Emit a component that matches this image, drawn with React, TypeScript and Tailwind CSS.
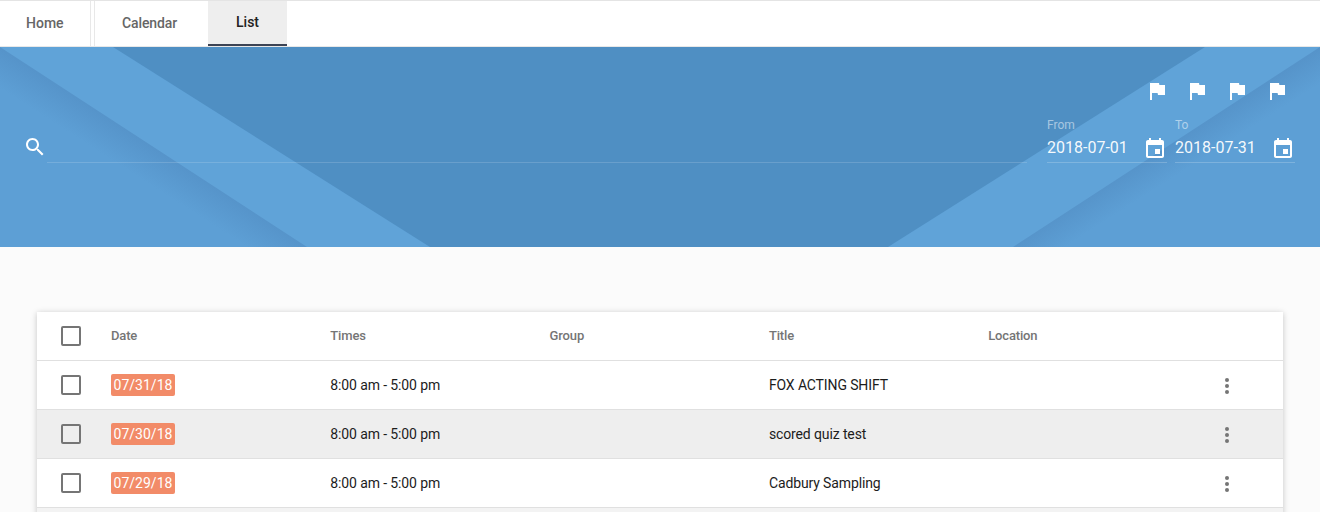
const rows = [
  { date: "07/31/18", title: "FOX ACTING SHIFT" },
  { date: "07/30/18", title: "scored quiz test", shaded: true },
  { date: "07/29/18", title: "Cadbury Sampling" },
];

const gridCols = "grid grid-cols-[50px_repeat(5,219.3px)_1fr] items-center pl-6";

function FlagIcon() {
  return (
    <svg width="24" height="24" viewBox="0 0 24 24" fill="white">
      <path d="M14.4 6L14 4H5v17h2v-7h5.6l.4 2h7V6z" />
    </svg>
  );
}

function EventIcon() {
  return (
    <svg width="24" height="24" viewBox="0 0 24 24" fill="white" className="shrink-0">
      <path d="M17 12h-5v5h5v-5zM16 1v2H8V1H6v2H5c-1.11 0-1.99.9-1.99 2L3 19c0 1.1.89 2 2 2h14c1.1 0 2-.9 2-2V5c0-1.1-.9-2-2-2h-1V1h-2zm3 18H5V8h14v11z" />
    </svg>
  );
}

function DateField({ label, value }: { label: string; value: string }) {
  return (
    <div className="w-[120px] border-b border-white/20">
      <div className="text-[12px] leading-[14px] text-white/50">{label}</div>
      <div className="mt-[5px] flex items-start justify-between pb-px">
        <span className="text-[16px] leading-[22px] text-white/95">{value}</span>
        <EventIcon />
      </div>
    </div>
  );
}

function Checkbox() {
  return <div className="h-5 w-5 rounded-[2px] border-2 border-[#757575]" />;
}

function HeroBackground() {
  return (
    <svg className="absolute inset-0" width="1320" height="200" viewBox="0 0 1320 200">
      <defs>
        <linearGradient id="leftFold" gradientUnits="userSpaceOnUse" x1="153" y1="100" x2="135" y2="128">
          <stop offset="0" stopColor="#5694ca" />
          <stop offset="1" stopColor="#5d9fd5" />
        </linearGradient>
        <linearGradient id="rightFold" gradientUnits="userSpaceOnUse" x1="1166" y1="100" x2="1182" y2="125">
          <stop offset="0" stopColor="#5694ca" />
          <stop offset="1" stopColor="#5d9fd5" />
        </linearGradient>
      </defs>
      <rect width="1320" height="200" fill="#4f8fc3" />
      <polygon points="0,0 113,0 430,200 0,200" fill="#60a3d8" />
      <polygon points="0,0 307,200 0,200" fill="url(#leftFold)" />
      <polygon points="1205,0 1320,0 1320,200 888,200" fill="#60a3d8" />
      <polygon points="1320,0 1320,200 1013,200" fill="url(#rightFold)" />
    </svg>
  );
}

export default function App() {
  return (
    <div className="h-[512px] w-[1320px] overflow-hidden bg-[#fbfbfb] font-['Roboto',sans-serif]">
      <nav className="flex h-[47px] border-y border-t-[#e4e4e4] border-b-[#e8e8e8] bg-white text-[14px] font-medium">
        <div className="flex w-[91px] items-center border-r border-[#e8e8e8] pl-[26px] text-[#666]">Home</div>
        <div className="ml-[3px] flex w-[114px] items-center justify-center border-l border-[#e8e8e8] pr-1 tracking-[-0.1px] text-[#666]">Calendar</div>
        <div className="flex h-[45px] w-[79px] items-center justify-center border-b-2 border-[#3c4354] bg-[#eeeeee] text-[#222]">List</div>
      </nav>

      <header className="relative h-[200px]">
        <HeroBackground />
        <div className="relative pt-8">
          <div className="flex justify-end gap-4 pr-[31px]">
            <FlagIcon />
            <FlagIcon />
            <FlagIcon />
            <FlagIcon />
          </div>
          <div className="mt-[15px] flex items-end pl-[23px] pr-[25px]">
            <svg width="24" height="24" viewBox="0 0 24 24" fill="white" className="mb-1 shrink-0">
              <path d="M15.5 14h-.79l-.28-.27C15.41 12.59 16 11.11 16 9.5 16 5.91 13.09 3 9.5 3S3 5.91 3 9.5 5.91 16 9.5 16c1.61 0 3.09-.59 4.23-1.57l.27.28v.79l5 4.99L20.49 19l-4.99-5zm-6 0C7.01 14 5 11.99 5 9.5S7.01 5 9.5 5 14 7.01 14 9.5 11.99 14 9.5 14z" />
            </svg>
            <div className="h-px flex-1 bg-white/15" />
            <div className="ml-5 flex gap-2">
              <DateField label="From" value="2018-07-01" />
              <DateField label="To" value="2018-07-31" />
            </div>
          </div>
        </div>
      </header>

      <section className="mx-[37px] mt-[65px] bg-white shadow-[0_1px_6px_rgba(0,0,0,0.22)]">
        <div className={`${gridCols} h-[49px] border-b border-[#e0e0e0] text-[13px] font-medium tracking-[-0.15px] text-[#757575]`}>
          <Checkbox />
          <span>Date</span>
          <span>Times</span>
          <span>Group</span>
          <span>Title</span>
          <span>Location</span>
        </div>
        {rows.map((row) => (
          <div
            key={row.date}
            className={`${gridCols} h-[49px] border-b border-[#e0e0e0] text-[14px] tracking-[-0.12px] text-[#1c1c1c] ${row.shaded ? "bg-[#eeeeee]" : ""}`}
          >
            <Checkbox />
            <div>
              <span className="inline-block h-[22px] w-16 rounded-[2px] bg-[#f28b68] text-center leading-[22px] tracking-normal text-white">
                {row.date}
              </span>
            </div>
            <span>8:00 am - 5:00 pm</span>
            <span />
            <span>{row.title}</span>
            <span />
            <div className="flex justify-center pr-[37px]">
              <div className="mt-[2px] flex flex-col gap-[2px]">
                <div className="h-1 w-1 rounded-full bg-[#757575]" />
                <div className="h-1 w-1 rounded-full bg-[#757575]" />
                <div className="h-1 w-1 rounded-full bg-[#757575]" />
              </div>
            </div>
          </div>
        ))}
        <div className="h-[49px] bg-[#f3f3f3]" />
      </section>
    </div>
  );
}
